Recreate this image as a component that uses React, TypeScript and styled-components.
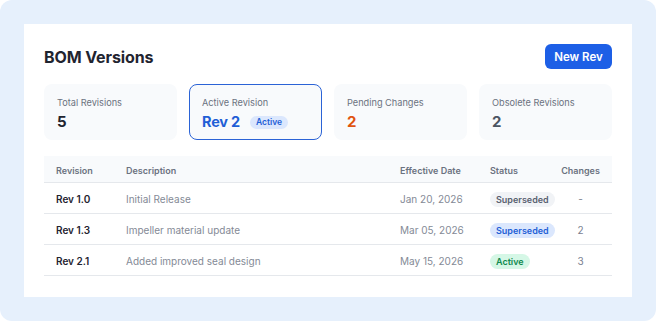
import React from 'react'
import styled, { createGlobalStyle } from 'styled-components'

const GlobalStyle = createGlobalStyle`
  html, body {
    margin: 0;
    padding: 0;
    background: #ffffff;
  }
  body {
    font-family: Inter, 'Noto Sans', Arial, sans-serif;
    -webkit-font-smoothing: antialiased;
  }
`

const Page = styled.div`
  box-sizing: border-box;
  width: 656px;
  height: 321px;
  padding: 24px;
  background: #e6f0fc;
  border-radius: 12px;
`

const Card = styled.div`
  box-sizing: border-box;
  height: 273px;
  background: #ffffff;
  padding: 20px;
  display: flex;
  flex-direction: column;
`

const Header = styled.div`
  display: flex;
  align-items: center;
  justify-content: space-between;
  height: 25px;
`

const Title = styled.h2`
  margin: 0;
  font-size: 16px;
  font-weight: 700;
  color: #1f2430;
  letter-spacing: -0.1px;
`

const PrimaryButton = styled.button`
  height: 25px;
  width: 67px;
  border: none;
  border-radius: 6px;
  background: #1d5fe6;
  color: #ffffff;
  font-family: inherit;
  font-size: 11.5px;
  font-weight: 600;
  padding: 0;
  cursor: pointer;
`

const StatGrid = styled.div`
  display: grid;
  grid-template-columns: repeat(4, 1fr);
  gap: 12px;
  margin-top: 15px;
`

const StatCard = styled.div<{ $active?: boolean }>`
  box-sizing: border-box;
  height: 56px;
  padding: 11px 12px 10px;
  border-radius: 8px;
  background: #f8fafc;
  border: 1px solid ${({ $active }) => ($active ? '#2b63d6' : 'transparent')};
  display: flex;
  flex-direction: column;
  gap: 3px;
`

const StatLabel = styled.div`
  font-size: 9.2px;
  line-height: 14px;
  color: #6b7280;
`

const StatValue = styled.div<{ $tone?: 'blue' | 'orange' | 'gray' | 'dark' }>`
  display: flex;
  align-items: center;
  gap: 10px;
  font-size: ${({ $tone }) => ($tone === 'blue' ? '14.5px' : '15px')};
  line-height: 18px;
  font-weight: 700;
  letter-spacing: -0.2px;
  color: ${({ $tone }) =>
    $tone === 'blue' ? '#1f5fd6' : $tone === 'orange' ? '#e0540f' : $tone === 'gray' ? '#4b5563' : '#1f2430'};
`

const Pill = styled.span<{ $kind: 'gray' | 'blue' | 'green' }>`
  display: inline-flex;
  align-items: center;
  height: 15px;
  padding: 0 6px;
  border-radius: 999px;
  font-size: 9px;
  font-weight: 600;
  letter-spacing: 0;
  background: ${({ $kind }) => ($kind === 'blue' ? '#dbe7fd' : $kind === 'green' ? '#d5f7e6' : '#f1f3f6')};
  color: ${({ $kind }) => ($kind === 'blue' ? '#1f5fd6' : $kind === 'green' ? '#0f8a4f' : '#596170')};
`

const SmallPill = styled(Pill)`
  height: 13px;
  font-size: 8.5px;
  padding: 0 6px;
`

const Table = styled.div`
  margin-top: 16px;
  display: flex;
  flex-direction: column;
`

const Row = styled.div<{ $head?: boolean }>`
  display: grid;
  grid-template-columns: 70px 274px 90px 71px 1fr;
  align-items: center;
  height: ${({ $head }) => ($head ? '27px' : '31px')};
  padding-top: 2px;
  background: ${({ $head }) => ($head ? '#f8fafc' : 'transparent')};
  border-bottom: 1px solid #e5e8ec;
  box-sizing: border-box;
`

const Cell = styled.div<{ $center?: boolean; $kind?: 'head' | 'rev' | 'muted' | 'num' }>`
  padding: ${({ $center }) => ($center ? '0' : '0 0 0 12px')};
  text-align: ${({ $center }) => ($center ? 'center' : 'left')};
  white-space: nowrap;
  font-size: ${({ $kind }) => ($kind === 'head' ? '9px' : '10px')};
  font-weight: ${({ $kind }) => ($kind === 'head' ? 600 : $kind === 'rev' ? 600 : 400)};
  color: ${({ $kind }) =>
    $kind === 'head' ? '#6b7280' : $kind === 'rev' ? '#1f2430' : $kind === 'num' ? '#7b8190' : '#848a96'};
`

type Revision = {
  rev: string
  description: string
  date: string
  status: string
  kind: 'gray' | 'blue' | 'green'
  changes: string
}

const REVISIONS: Revision[] = [
  { rev: 'Rev 1.0', description: 'Initial Release', date: 'Jan 20, 2026', status: 'Superseded', kind: 'gray', changes: '-' },
  { rev: 'Rev 1.3', description: 'Impeller material update', date: 'Mar 05, 2026', status: 'Superseded', kind: 'blue', changes: '2' },
  { rev: 'Rev 2.1', description: 'Added improved seal design', date: 'May 15, 2026', status: 'Active', kind: 'green', changes: '3' },
]

export default function App() {
  return (
    <>
      <GlobalStyle />
      <Page>
        <Card>
          <Header>
            <Title>BOM Versions</Title>
            <PrimaryButton>New Rev</PrimaryButton>
          </Header>

          <StatGrid>
            <StatCard>
              <StatLabel>Total Revisions</StatLabel>
              <StatValue $tone="dark">5</StatValue>
            </StatCard>
            <StatCard $active>
              <StatLabel>Active Revision</StatLabel>
              <StatValue $tone="blue">
                Rev 2
                <SmallPill $kind="blue">Active</SmallPill>
              </StatValue>
            </StatCard>
            <StatCard>
              <StatLabel>Pending Changes</StatLabel>
              <StatValue $tone="orange">2</StatValue>
            </StatCard>
            <StatCard>
              <StatLabel>Obsolete Revisions</StatLabel>
              <StatValue $tone="gray">2</StatValue>
            </StatCard>
          </StatGrid>

          <Table>
            <Row $head>
              <Cell $kind="head">Revision</Cell>
              <Cell $kind="head">Description</Cell>
              <Cell $kind="head">Effective Date</Cell>
              <Cell $kind="head">Status</Cell>
              <Cell $kind="head" $center>Changes</Cell>
            </Row>
            {REVISIONS.map((r) => (
              <Row key={r.rev}>
                <Cell $kind="rev">{r.rev}</Cell>
                <Cell $kind="muted">{r.description}</Cell>
                <Cell $kind="muted">{r.date}</Cell>
                <Cell>
                  <Pill $kind={r.kind}>{r.status}</Pill>
                </Cell>
                <Cell $kind="num" $center>{r.changes}</Cell>
              </Row>
            ))}
          </Table>
        </Card>
      </Page>
    </>
  )
}
